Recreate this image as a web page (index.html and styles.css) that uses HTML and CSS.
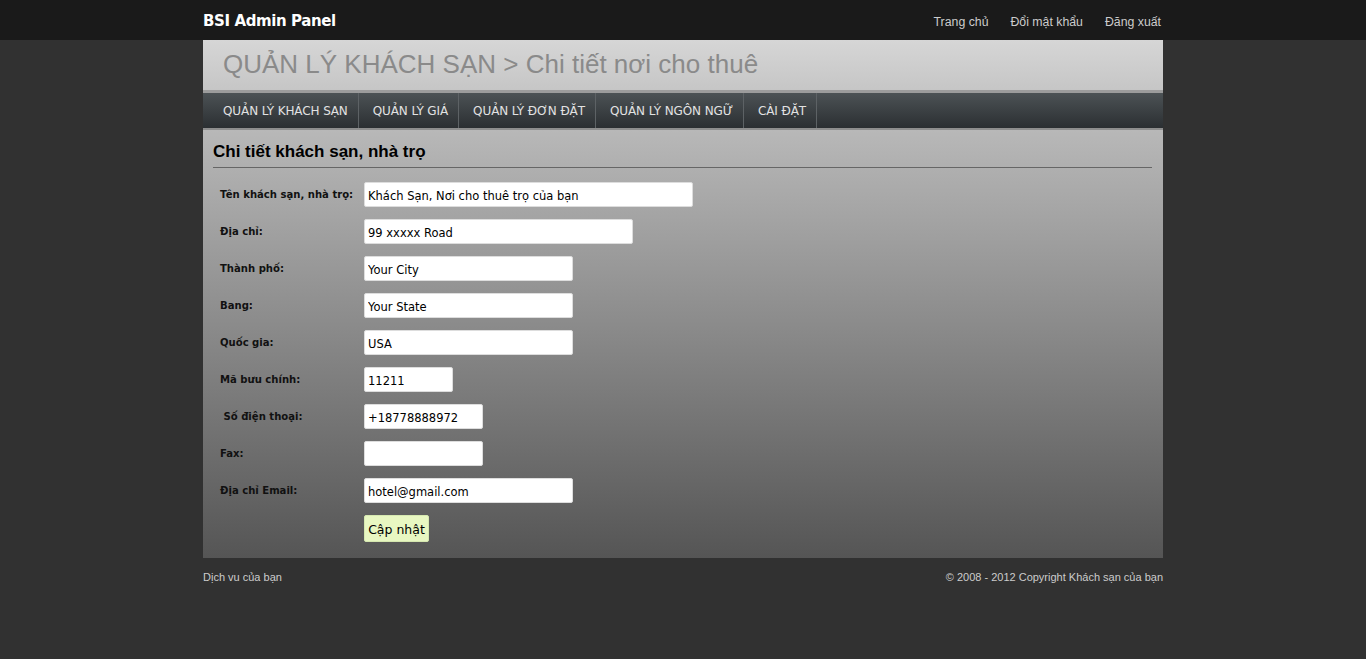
FILE: index.html
```html
<!DOCTYPE html>
<html>
<head>
  <title>BSI Admin Panel</title>
  <link rel="stylesheet" href="styles.css">
</head>
<body>
<div class="topbar">
  <div class="wrap topbar-inner">
    <div class="brand">BSI Admin Panel</div>
    <div class="toplinks">
      <a href="#">Trang chủ</a>
      <a href="#">Đổi mật khẩu</a>
      <a href="#">Đăng xuất</a>
    </div>
  </div>
</div>
<div class="wrap">
  <div class="page-head">QUẢN LÝ KHÁCH SẠN &gt; Chi tiết nơi cho thuê</div>
  <ul class="menu">
    <li><a href="#">QUẢN LÝ KHÁCH SẠN</a></li>
    <li><a href="#">QUẢN LÝ GIÁ</a></li>
    <li><a href="#">QUẢN LÝ ĐƠN ĐẶT</a></li>
    <li><a href="#">QUẢN LÝ NGÔN NGỮ</a></li>
    <li><a href="#">CÀI ĐẶT</a></li>
  </ul>
  <div class="content">
    <h2>Chi tiết khách sạn, nhà trọ</h2>
    <form class="detail-form">
      <label for="name">Tên khách sạn, nhà trọ:</label>
      <input type="text" id="name" class="w330" value="Khách Sạn, Nơi cho thuê trọ của bạn">
      <label for="addr">Địa chỉ:</label>
      <input type="text" id="addr" class="w270" value="99 xxxxx Road">
      <label for="city">Thành phố:</label>
      <input type="text" id="city" class="w210" value="Your City">
      <label for="state">Bang:</label>
      <input type="text" id="state" class="w210" value="Your State">
      <label for="country">Quốc gia:</label>
      <input type="text" id="country" class="w210" value="USA">
      <label for="zip">Mã bưu chính:</label>
      <input type="text" id="zip" class="w90" value="11211">
      <label for="phone">&nbsp;Số điện thoại:</label>
      <input type="text" id="phone" class="w120" value="+18778888972">
      <label for="fax">Fax:</label>
      <input type="text" id="fax" class="w120" value="">
      <label for="email">Địa chỉ Email:</label>
      <input type="text" id="email" class="w210" value="hotel@gmail.com">
      <span></span>
      <div><button type="button" class="btn">Cập nhật</button></div>
    </form>
  </div>
  <div class="footer">
    <span>Dịch vu của bạn</span>
    <span>© 2008 - 2012 Copyright Khách sạn của bạn</span>
  </div>
</div>
</body>
</html>
```

FILE: styles.css
```css
body {
  margin: 0;
  background-color: #313131;
  font-family: "Liberation Sans", Arial, sans-serif;
  color: #000;
}

a {
  text-decoration: none;
}

.wrap {
  width: 960px;
  margin: 0 auto;
}

.topbar {
  background-color: #1a1a1a;
  height: 40px;
}

.topbar-inner {
  display: flex;
  align-items: center;
  justify-content: space-between;
  height: 40px;
}

.brand {
  font-family: "DejaVu Sans", Verdana, sans-serif;
  font-weight: bold;
  font-size: 15px;
  letter-spacing: -0.4px;
  color: #fff;
  padding-top: 2px;
}

.toplinks {
  display: flex;
  gap: 22px;
  padding: 3px 2px 0 0;
}

.toplinks a {
  color: #ccc;
  font-size: 12.3px;
}

.page-head {
  height: 50px;
  padding-left: 20px;
  line-height: 48px;
  font-size: 26px;
  color: #8a8a8a;
  background: linear-gradient(to bottom, #d6d6d6, #c6c6c6);
  border-bottom: 3px solid #9c9c9c;
}

.menu {
  display: flex;
  margin: 0;
  padding: 0 0 0 6px;
  list-style: none;
  height: 35px;
  background: linear-gradient(to bottom, #4c5255, #2b2f32);
  border-bottom: 2px solid #8e8e8e;
}

.menu li {
  border-right: 1px solid #5d6265;
}

.menu a {
  display: block;
  padding: 1px 10px 0 14px;
  line-height: 34px;
  font-family: "DejaVu Sans", sans-serif;
  font-size: 12px;
  letter-spacing: -0.1px;
  color: #e2e2e2;
}

.content {
  padding: 12px 11px 16px 10px;
  background: linear-gradient(to bottom, #b8b8b8, #555);
}

.content h2 {
  margin: 0 0 14px;
  padding-bottom: 5px;
  font-size: 17px;
  border-bottom: 1px solid #666;
}

.detail-form {
  display: grid;
  grid-template-columns: 144px 1fr;
  row-gap: 12px;
  padding-left: 7px;
  align-items: center;
}

.detail-form label {
  font-family: "DejaVu Sans Condensed", "DejaVu Sans", sans-serif;
  font-weight: bold;
  font-size: 11.2px;
  color: #111;
  align-self: start;
  padding-top: 6px;
}

.detail-form input {
  box-sizing: border-box;
  height: 25px;
  border: 1px solid #ddd;
  border-radius: 2px;
  padding: 2px 3px 0;
  font-family: "DejaVu Sans", sans-serif;
  font-size: 11.5px;
  color: #000;
  background: #fff;
}

.w330 { width: 329px; }
.w270 { width: 269px; }
.w210 { width: 209px; }
.w120 { width: 119px; }
.w90 { width: 89px; }

.btn {
  box-sizing: border-box;
  height: 27px;
  width: 65px;
  padding: 1px 0 0;
  border: 1px solid #d6e8b0;
  border-radius: 2px;
  background-color: #e8f7c2;
  font-family: "DejaVu Sans", sans-serif;
  font-size: 12.5px;
  color: #000;
}

.footer {
  display: flex;
  justify-content: space-between;
  padding-top: 13px;
  font-size: 11px;
  color: #ccc;
}
```
